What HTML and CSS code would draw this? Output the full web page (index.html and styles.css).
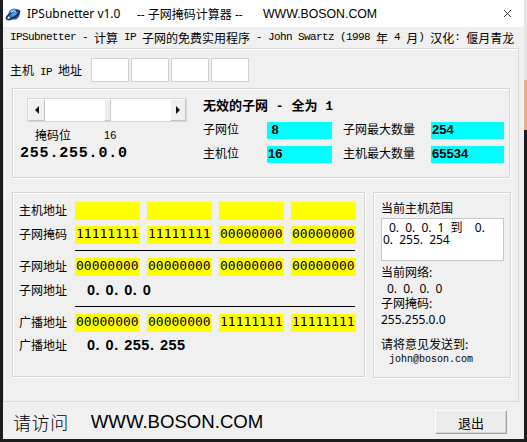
FILE: index.html
```html
<!DOCTYPE html>
<html lang="zh">
<head>
<meta charset="utf-8">
<title>IPSubnetter v1.0</title>
<link rel="stylesheet" href="styles.css">
</head>
<body>
<div class="win">
  <div class="titlebar">
    <svg class="appicon" viewBox="0 0 16 16" width="16" height="16">
      <defs>
        <radialGradient id="gl" cx="0.4" cy="0.35" r="0.7">
          <stop offset="0" stop-color="#9fd3ff"/>
          <stop offset="0.5" stop-color="#2f7fe0"/>
          <stop offset="1" stop-color="#103f9a"/>
        </radialGradient>
      </defs>
      <circle cx="9" cy="8" r="5.6" fill="url(#gl)"/>
      <ellipse cx="8" cy="9" rx="7.4" ry="2.6" transform="rotate(-32 8 9)" fill="none" stroke="#1d2b55" stroke-width="1.6"/>
      <path d="M6 6.5 Q8 4.5 11 5.2" fill="none" stroke="#e8f6ff" stroke-width="1"/>
    </svg>
    <span class="t1">IPSubnetter v1.0</span>
    <span class="t2">-- 子网掩码计算器 --</span>
    <span class="t3">WWW.BOSON.COM</span>
    <svg class="close" viewBox="0 0 10 10" width="10" height="10">
      <path d="M1 1 L9 9 M9 1 L1 9" stroke="#222" stroke-width="1" fill="none"/>
    </svg>
  </div>

  <div class="info"><span class="m">IPSubnetter - </span>计算<span class="m"> IP </span>子网的免费实用程序<span class="m"> - John Swartz (1998 </span>年<span class="m"> 4 </span>月<span class="m">) </span>汉化<span class="m">: </span>偃月青龙</div>

  <div class="panel">
    <div class="iprow">
      <span class="iplbl">主机<span class="m"> IP </span>地址</span>
      <div class="octets">
        <div class="oct"></div>
        <div class="oct"></div>
        <div class="oct"></div>
        <div class="oct"></div>
      </div>
    </div>

    <div class="grp g1">
      <div class="g1left">
        <div class="sbar">
          <div class="sbtn">
            <svg viewBox="0 0 4 8" width="4" height="8"><polygon points="4,0 0,4 4,8" fill="#111"/></svg>
          </div>
          <div class="strack"></div>
          <div class="sthumb"></div>
          <div class="strack"></div>
          <div class="sbtn">
            <svg viewBox="0 0 4 8" width="4" height="8"><polygon points="0,0 4,4 0,8" fill="#111"/></svg>
          </div>
        </div>
        <div class="maskrow"><span class="masklbl">掩码位</span><span class="maskbits">16</span></div>
        <div class="bigmask">255.255.0.0</div>
      </div>
      <div class="g1right">
        <div class="invalid">无效的子网<span class="bm"> - </span>全为<span class="bm"> 1</span></div>
        <div class="crow">
          <span class="clbl1">子网位</span><span class="cval c1"> 8</span>
          <span class="clbl2">子网最大数量</span><span class="cval c2">254</span>
        </div>
        <div class="crow crow2">
          <span class="clbl1">主机位</span><span class="cval c1">16</span>
          <span class="clbl2">主机最大数量</span><span class="cval c2">65534</span>
        </div>
      </div>
    </div>

    <div class="lower">
      <div class="grp g2">
        <div class="brow">
          <span class="blbl">主机地址</span>
          <div class="ybox"></div><div class="ybox"></div><div class="ybox"></div><div class="ybox"></div>
        </div>
        <div class="brow r2">
          <span class="blbl">子网掩码</span>
          <div class="ybox">11111111</div><div class="ybox">11111111</div><div class="ybox">00000000</div><div class="ybox">00000000</div>
        </div>
        <div class="rule r-a"></div>
        <div class="brow r3">
          <span class="blbl">子网地址</span>
          <div class="ybox">00000000</div><div class="ybox">00000000</div><div class="ybox">00000000</div><div class="ybox">00000000</div>
        </div>
        <div class="trow r4">
          <span class="blbl">子网地址</span>
          <span class="dotted">0. 0. 0. 0</span>
        </div>
        <div class="rule r-b"></div>
        <div class="brow r5">
          <span class="blbl">广播地址</span>
          <div class="ybox">00000000</div><div class="ybox">00000000</div><div class="ybox">11111111</div><div class="ybox">11111111</div>
        </div>
        <div class="trow r6">
          <span class="blbl">广播地址</span>
          <span class="dotted">0. 0. 255. 255</span>
        </div>
      </div>

      <div class="grp g3">
        <div class="rlbl">当前主机范围</div>
        <div class="range"><div class="rl rl1">0. 0. 0. 1 到  0.</div><div class="rl">0. 255. 254</div></div>
        <div class="net">
          <div>当前网络:</div>
          <div class="ind">0. 0. 0. 0</div>
          <div>子网掩码:</div>
          <div>255.255.0.0</div>
        </div>
        <div class="send">
          <div>请将意见发送到:</div>
          <div class="mail">john@boson.com</div>
        </div>
      </div>
    </div>
  </div>

  <div class="footer">
    <span class="visit">请访问</span>
    <span class="url">WWW.BOSON.COM</span>
    <div class="exit">退出</div>
  </div>
</div>
</body>
</html>
```

FILE: styles.css
```css
* { box-sizing: border-box; margin: 0; padding: 0; }

html, body { width: 527px; height: 442px; overflow: hidden; }

body {
  background:
    linear-gradient(#e4e4e4 0 80px, #e9ad88 80px 130px, transparent 130px) right top / 3px 100% no-repeat,
    #1d1d1f;
  font-family: "Noto Sans", "Noto Sans CJK SC", sans-serif;
  color: #000;
}

.win {
  margin-left: 3px;
  width: 521px;
  height: 439px;
  background: #f0f0f0;
  display: flex;
  flex-direction: column;
}

/* title bar */
.titlebar {
  height: 27px;
  flex: none;
  background: #fff;
  display: flex;
  align-items: center;
  padding-left: 2px;
  font-size: 12px;
  white-space: pre;
}
.appicon { width: 16px; height: 16px; margin-right: 6px; flex: none; }
.t1 { width: 110px; flex: none; }
.t2 { width: 126px; flex: none; }
.t3 { font-family: "Liberation Sans", sans-serif; font-size: 12.3px; }
.close { margin-left: auto; margin-right: 12px; width: 9px; height: 9px; }

/* info line */
.info {
  height: 21px;
  flex: none;
  padding-left: 7px;
  padding-bottom: 1px;
  display: flex;
  align-items: center;
  font-family: "Noto Sans CJK SC", sans-serif;
  font-size: 12px;
  white-space: pre;
}
.m {
  font-family: "Liberation Mono", monospace;
  font-size: 11px;
  letter-spacing: -0.6px;
}

/* main panel */
.panel {
  width: 516px;
  height: 354px;
  flex: none;
  border: 1px solid #d9d9d9;
  box-shadow: inset 1px 1px 0 #fff;
}

.iprow {
  margin-top: 9px;
  height: 24px;
  display: flex;
  align-items: center;
  padding-left: 6px;
}
.iplbl {
  width: 81px;
  flex: none;
  font-family: "Noto Sans CJK SC", sans-serif;
  font-size: 12px;
  white-space: pre;
  padding-bottom: 1px;
}
.iplbl .m { font-size: 11px; }
.octets { display: flex; gap: 2px; }
.oct {
  width: 38px;
  height: 24px;
  background: #fff;
  border: 1px solid #d0d0d0;
}

/* group boxes */
.grp {
  border: 1px solid #d6d6d6;
  box-shadow: inset 1px 1px 0 #fff, 1px 1px 0 #fff;
  font-family: "Noto Sans CJK SC", sans-serif;
  font-size: 12px;
}

.g1 {
  margin: 6px 8px 0 8px;
  height: 90px;
  display: flex;
  padding: 9px 0 0 14px;
}
.g1left { width: 176px; flex: none; }

.sbar {
  width: 160px;
  height: 24px;
  display: flex;
  border: 1px solid #d6d6d6;
  background: #fff;
}
.sbtn {
  width: 17px;
  flex: none;
  background: #f0f0f0;
  border: 1px solid;
  border-color: #fff #c4c4c4 #c4c4c4 #fff;
  display: flex;
  align-items: center;
  justify-content: center;
}
.sbtn:last-child { width: 16px; }
.strack { flex: 1; background: #fff; }
.sthumb {
  width: 7px;
  flex: none;
  background: #ececec;
  border: 1px solid;
  border-color: #fff #c8c8c8 #c8c8c8 #fff;
}

.maskrow {
  margin-top: 5px;
  height: 16px;
  line-height: 16px;
  display: flex;
}
.masklbl { margin-left: 8px; }
.maskbits {
  margin-left: 33px;
  font-family: "Liberation Sans", sans-serif;
  font-size: 11px;
}
.bigmask {
  margin: 1px 0 0 -7px;
  height: 20px;
  line-height: 20px;
  font-family: "Liberation Mono", monospace;
  font-weight: bold;
  font-size: 15px;
  letter-spacing: 0.8px;
}

.g1right { flex: 1; }
.invalid {
  margin-top: -1px;
  height: 16px;
  line-height: 16px;
  font-weight: bold;
  font-size: 13px;
  white-space: pre;
}
.bm { font-family: "Liberation Mono", monospace; font-size: 13px; }
.crow {
  margin-top: 9px;
  height: 17px;
  display: flex;
  align-items: flex-start;
}
.crow2 { margin-top: 7px; }
.clbl1 { width: 64px; flex: none; line-height: 14px; }
.clbl2 { width: 88px; margin-left: 11px; flex: none; line-height: 14px; }
.cval {
  height: 17px;
  background: #00ffff;
  font-family: "Liberation Sans", sans-serif;
  font-weight: bold;
  font-size: 13px;
  line-height: 16px;
  padding-left: 1px;
  white-space: pre;
  flex: none;
}
.c1 { width: 65px; }
.c2 { width: 73px; }

/* lower area */
.lower {
  margin: 14px 0 0 8px;
  display: flex;
  gap: 8px;
}
.g2 {
  width: 353px;
  height: 185px;
  padding: 9px 0 0 6px;
}
.brow {
  display: flex;
  gap: 7px;
  height: 18px;
}
.blbl { width: 56px; margin-right: -7px; flex: none; line-height: 16px; }
.ybox {
  width: 65px;
  height: 18px;
  background: #ffff00;
  font-family: "DejaVu Sans Mono", monospace;
  font-size: 13px;
  line-height: 15px;
  padding-left: 1px;
}
.r2 { margin-top: 6px; }
.rule {
  margin-left: 56px;
  width: 280px;
  height: 1px;
  background: #000;
}
.r-a { margin-top: 6px; }
.r3 { margin-top: 7px; }
.trow { display: flex; height: 16px; line-height: 16px; }
.r4 { margin-top: 6px; }
.r-b { margin-top: 8px; }
.r5 { margin-top: 7px; }
.r6 { margin-top: 5px; }
.dotted {
  margin-left: 19px;
  font-family: "Liberation Sans", sans-serif;
  font-weight: bold;
  font-size: 14.5px;
  letter-spacing: 0.5px;
  word-spacing: 1px;
  white-space: pre;
}

.g3 {
  width: 138px;
  height: 186px;
  padding: 7px 0 0 7px;
}
.rlbl { height: 16px; line-height: 16px; }
.range {
  margin-top: 2px;
  width: 123px;
  height: 43px;
  background: #fff;
  border: 1px solid #c8c8c8;
  padding: 3px 0 0 1px;
}
.rl {
  font-family: "Noto Sans", "Noto Sans CJK SC", sans-serif;
  font-size: 12px;
  line-height: 12px;
  white-space: pre;
  word-spacing: 3px;
}
.rl1 { padding-left: 6px; }
.net {
  margin-top: 4px;
  line-height: 15.6px;
}
.net div { font-family: "Noto Sans", "Noto Sans CJK SC", sans-serif; }
.ind { padding-left: 6px; word-spacing: 3px; }
.send { margin-top: 9px; line-height: 15.6px; }
.mail {
  padding-left: 8px;
  font-family: "Liberation Mono", monospace;
  font-size: 10px;
}

/* footer */
.footer {
  flex: 1;
  display: flex;
  align-items: center;
  padding: 3px 0 0 10px;
}
.visit {
  font-family: "Noto Sans CJK SC", sans-serif;
  font-size: 18px;
  letter-spacing: 0.6px;
  font-weight: 300;
}
.url {
  margin-left: 22px;
  font-family: "Liberation Sans", sans-serif;
  font-size: 18.6px;
}
.exit {
  margin-left: auto;
  margin-right: 17px;
  width: 72px;
  height: 24px;
  background: #ececec;
  border: 1px solid;
  border-color: #fff #a0a0a0 #a0a0a0 #fff;
  box-shadow: inset -1px -1px 0 #d4d4d4;
  display: flex;
  align-items: center;
  justify-content: center;
  font-family: "Noto Sans CJK SC", sans-serif;
  font-size: 13px;
}
```
